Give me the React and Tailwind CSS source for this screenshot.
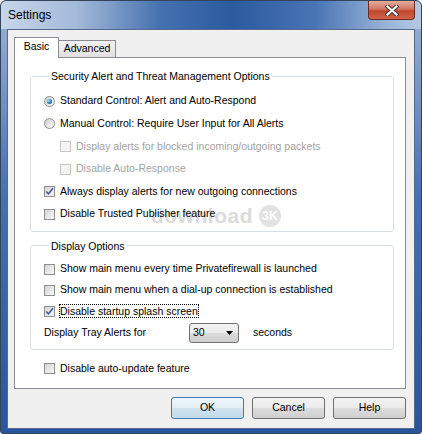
import React from 'react';

const Check = ({ checked, disabled }) => (
    <span
        className={`flex h-[11px] w-[11px] shrink-0 items-center justify-center border ${
            disabled
                ? 'border-[#c6c6c6] bg-[#f4f4f4]'
                : 'border-[#8e8f8f] bg-[linear-gradient(135deg,#d3d3d3,#f9f9f9)]'
        }`}
    >
        {checked && (
            <svg width="9" height="9" viewBox="0 0 9 9">
                <path d="M1.3 4.4 L3.5 6.9 L7.9 1.3" fill="none" stroke="#3b5398" strokeWidth="1.5" />
            </svg>
        )}
    </span>
);

const Radio = ({ checked }) => (
    <span className="flex h-[11px] w-[11px] shrink-0 items-center justify-center rounded-full border border-[#8e8f8f] bg-[linear-gradient(135deg,#cfcfcf,#fbfbfb)]">
        {checked && (
            <span className="h-[5px] w-[5px] rounded-full bg-[radial-gradient(circle_at_35%_35%,#a8e0ff,#1f6db2_60%,#0b437f)]" />
        )}
    </span>
);

const Option = ({ radio, checked, disabled, indent, focus, h, children }) => (
    <div className={`flex items-center gap-[5px] ${h} ${indent ? 'pl-[16px]' : ''}`}>
        {radio ? <Radio checked={checked} /> : <Check checked={checked} disabled={disabled} />}
        {focus ? (
            <span className="-ml-px border border-dotted border-black leading-[12px]">{children}</span>
        ) : (
            <span className={disabled ? 'text-[#a3a3a3]' : ''}>{children}</span>
        )}
    </div>
);

const Button = ({ primary, children }) => (
    <button
        className={`h-[22px] w-[73px] rounded-[3px] border ${
            primary
                ? 'border-[#3c7fb1] bg-[linear-gradient(#eef6fb_0%,#e2edf5_50%,#d0e3ef_51%,#c3dae9_100%)]'
                : 'border-[#707070] bg-[linear-gradient(#f2f2f2_0%,#ebebeb_50%,#dddddd_51%,#cfcfcf_100%)]'
        }`}
    >
        {children}
    </button>
);

export default function App() {
    return (
        <div className="h-[434px] w-[422px] bg-white font-['Liberation_Sans',Arial,sans-serif] text-[10.5px] text-black">
            <div className="flex h-full w-full flex-col rounded-t-[6px] rounded-b-[3px] border border-[#34445a] bg-[linear-gradient(#9db5d8,#4670b0_45%,#2a559c_100%)]">
                {/* Title bar */}
                <div className="flex h-[28px] items-start justify-between rounded-t-[6px] bg-[linear-gradient(90deg,#c7d6e9_0%,#a3bad9_18%,#4571af_38%,#2b5a9f_55%,#4a75b5_75%,#9bb5d8_92%,#b4c8e2_100%)]">
                    <span className="pl-[7px] pt-[7px] text-[12px] leading-[15px]">Settings</span>
                    <div className="mr-[6px] flex h-[19px] w-[47px] items-center justify-center rounded-b-[4px] border border-t-0 border-[#6b2b20] bg-[linear-gradient(#e6ad9c,#d17462_45%,#c1462d_55%,#d0644a)]">
                        <svg width="14" height="11" viewBox="0 0 14 11">
                            <path d="M2.5 1.5 L11.5 9.5 M11.5 1.5 L2.5 9.5" stroke="#3b2a2a" strokeWidth="4" strokeLinecap="square" />
                            <path d="M2.5 1.5 L11.5 9.5 M11.5 1.5 L2.5 9.5" stroke="#ffffff" strokeWidth="2.2" strokeLinecap="square" />
                        </svg>
                    </div>
                </div>

                {/* Client area */}
                <div className="mx-[6px] mb-[4px] flex flex-1 flex-col border border-[#56698a] bg-[#f0f0f0] px-[6px] pt-[7px]">
                    {/* Tabs */}
                    <div className="flex h-[20px] items-end">
                        <div className="relative z-10 -mb-px flex h-[21px] w-[45px] items-center justify-center border border-b-0 border-[#898c95] bg-white pb-[2px]">
                            Basic
                        </div>
                        <div className="-ml-px flex h-[17px] w-[58px] items-center justify-center border border-b-0 border-[#898c95] bg-[linear-gradient(#f3f3f3,#e0e0e0)]">
                            Advanced
                        </div>
                    </div>

                    {/* Panel */}
                    <div className="relative flex h-[332px] w-[392px] flex-col border border-[#898c95] bg-white pl-[15px] pr-[11px] pt-[11px]">
                        <div className="pointer-events-none absolute left-[136px] top-[147px] flex items-center gap-[6px] opacity-60">
                            <span className="text-[21px] font-bold leading-[22px] tracking-[0.5px] text-[#c4c4c4]">download</span>
                            <span className="flex h-[22px] w-[22px] items-center justify-center rounded-full bg-[#cfcfcf] text-[12px] font-bold text-white">
                                3K
                            </span>
                        </div>

                        <fieldset className="relative rounded-[3px] border border-[#d5dfe5] pb-[5px] pl-[13px] pt-[7px]">
                            <legend className="ml-[5px] px-[2px] leading-[14px]">Security Alert and Threat Management Options</legend>
                            <Option radio checked h="h-[22.6px]">Standard Control: Alert and Auto-Respond</Option>
                            <Option radio h="h-[22.6px]">Manual Control: Require User Input for All Alerts</Option>
                            <Option disabled indent h="h-[22.6px]">Display alerts for blocked incoming/outgoing packets</Option>
                            <Option disabled indent h="h-[22.6px]">Disable Auto-Response</Option>
                            <Option checked h="h-[22.6px]">Always display alerts for new outgoing connections</Option>
                            <Option h="h-[22.6px]">Disable Trusted Publisher feature</Option>
                        </fieldset>

                        <fieldset className="relative mt-[7px] rounded-[3px] border border-[#d5dfe5] pb-[5px] pl-[13px] pt-[6px]">
                            <legend className="ml-[5px] px-[2px] leading-[14px]">Display Options</legend>
                            <Option h="h-[21px]">Show main menu every time Privatefirewall is launched</Option>
                            <Option h="h-[21px]">Show main menu when a dial-up connection is established</Option>
                            <Option checked focus h="h-[21px]">Disable startup splash screen</Option>
                            <div className="flex h-[22px] items-center">
                                <span className="w-[145px]">Display Tray Alerts for</span>
                                <div className="flex h-[20px] w-[50px] items-center justify-between rounded-[3px] border border-[#707070] bg-[linear-gradient(#f2f2f2_0%,#ebebeb_50%,#dddddd_51%,#cfcfcf_100%)] pl-[3px] pr-[5px]">
                                    <span>30</span>
                                    <svg width="7" height="4" viewBox="0 0 7 4">
                                        <path d="M0 0 H7 L3.5 4 Z" fill="#000" />
                                    </svg>
                                </div>
                                <span className="ml-[14px]">seconds</span>
                            </div>
                        </fieldset>

                        <div className="relative mt-[8px] pl-[14px]">
                            <Option h="h-[22px]">Disable auto-update feature</Option>
                        </div>
                    </div>

                    {/* Buttons */}
                    <div className="mt-[8px] flex w-[392px] justify-end gap-[8px]">
                        <Button primary>OK</Button>
                        <Button>Cancel</Button>
                        <Button>Help</Button>
                    </div>
                </div>
            </div>
        </div>
    );
}
